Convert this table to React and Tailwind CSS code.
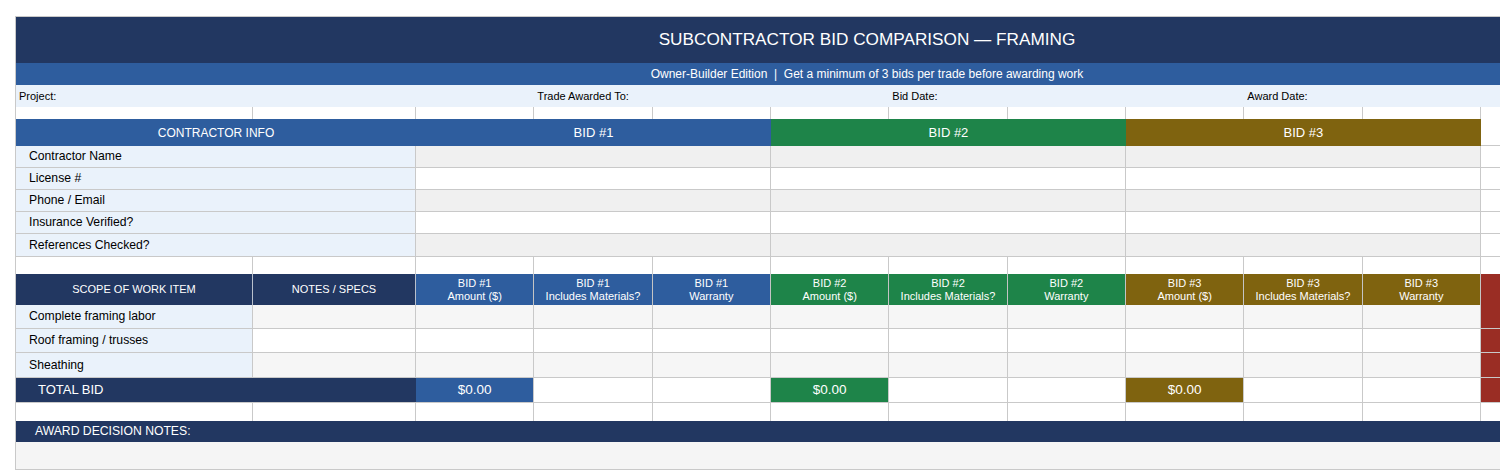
import React from "react";

const NAVY = "bg-[#223761]";
const BLUE = "bg-[#2e5d9e]";
const GREEN = "bg-[#1e8449]";
const GOLD = "bg-[#7f630f]";
const RED = "bg-[#9a2d24]";
const LIGHT = "bg-[#eaf2fb]";
const LINE = "border-[#c9c9c9]";

const bids = [
  { n: 1, bg: BLUE },
  { n: 2, bg: GREEN },
  { n: 3, bg: GOLD },
];

function BlankRow({ h }) {
  return (
    <>
      {Array.from({ length: 12 }).map((_, i) => (
        <div key={i} className={`${h} bg-white border-r ${LINE}`} />
      ))}
    </>
  );
}

export default function App() {
  const contractorRows = [
    "Contractor Name",
    "License #",
    "Phone / Email",
    "Insurance Verified?",
    "References Checked?",
  ];
  const contractorHeights = ["h-[22px]", "h-[22px]", "h-[22px]", "h-[22px]", "h-[23px]"];
  const scopeRows = ["Complete framing labor", "Roof framing / trusses", "Sheathing"];
  const scopeHeights = ["h-[24px]", "h-[24px]", "h-[25px]"];
  const subCols = ["Amount ($)", "Includes Materials?", "Warranty"];

  return (
    <div className="w-[1500px] h-[473px] overflow-hidden bg-white pt-[16px] pl-[15px] font-['Liberation_Sans',Arial,sans-serif] text-black">
      <div className={`grid w-max grid-cols-[237px_163px_repeat(9,118.333px)_237px] border-l border-t ${LINE}`}>
        {/* Title */}
        <div className={`col-span-12 h-[46px] ${NAVY} text-white text-[17.2px] flex items-center justify-center`}>
          SUBCONTRACTOR BID COMPARISON — FRAMING
        </div>
        {/* Subtitle */}
        <div className={`col-span-12 h-[22px] ${BLUE} text-white text-[12px] flex items-center justify-center whitespace-pre`}>
          {"Owner-Builder Edition  |  Get a minimum of 3 bids per trade before awarding work"}
        </div>
        {/* Project row */}
        {["Project:", "Trade Awarded To:", "Bid Date:", "Award Date:"].map((t) => (
          <div key={t} className={`col-span-3 h-[22px] ${LIGHT} text-[11px] pl-[3px] pb-[3px] flex items-end`}>
            {t}
          </div>
        ))}
        <BlankRow h="h-[12px]" />

        {/* Contractor header */}
        <div className={`col-span-2 h-[27px] ${BLUE} text-white text-[12px] flex items-center justify-center`}>
          CONTRACTOR INFO
        </div>
        {bids.map((b) => (
          <div key={b.n} className={`col-span-3 h-[27px] ${b.bg} text-white text-[13px] flex items-center justify-center`}>
            BID #{b.n}
          </div>
        ))}
        <div className={`h-[27px] bg-white border-b border-r ${LINE}`} />

        {/* Contractor rows */}
        {contractorRows.map((label, i) => (
          <React.Fragment key={label}>
            <div className={`col-span-2 ${contractorHeights[i]} ${LIGHT} border-b border-r ${LINE} text-[12.2px] pl-[13px] flex items-center`}>
              {label}
            </div>
            {bids.map((b) => (
              <div
                key={b.n}
                className={`col-span-3 ${contractorHeights[i]} ${i % 2 === 0 ? "bg-[#f0f0f0]" : "bg-white"} border-b border-r ${LINE}`}
              />
            ))}
            <div className={`${contractorHeights[i]} bg-white border-b border-r ${LINE}`} />
          </React.Fragment>
        ))}

        <BlankRow h="h-[17px]" />

        {/* Scope header */}
        <div className={`h-[31px] ${NAVY} text-white text-[11px] flex items-center justify-center border-r border-[#b9c0cc]`}>
          SCOPE OF WORK ITEM
        </div>
        <div className={`h-[31px] ${NAVY} text-white text-[11px] flex items-center justify-center border-r border-[#b9c0cc]`}>
          NOTES / SPECS
        </div>
        {bids.map((b) =>
          subCols.map((s) => (
            <div
              key={`${b.n}-${s}`}
              className={`h-[31px] ${b.bg} text-white text-[11px] leading-[13px] flex flex-col items-center justify-center border-r border-[#c4c4c4]`}
            >
              <span>BID #{b.n}</span>
              <span>{s}</span>
            </div>
          ))
        )}
        <div className={`h-[31px] ${RED}`} />

        {/* Scope rows */}
        {scopeRows.map((label, i) => (
          <React.Fragment key={label}>
            <div className={`${scopeHeights[i]} ${LIGHT} border-b border-r ${LINE} text-[12.2px] pl-[13px] flex items-center`}>
              {label}
            </div>
            {Array.from({ length: 10 }).map((_, j) => (
              <div
                key={j}
                className={`${scopeHeights[i]} ${i % 2 === 0 ? "bg-[#f6f6f6]" : "bg-white"} border-b border-r ${LINE}`}
              />
            ))}
            <div className={`${scopeHeights[i]} ${RED} border-b border-[#c9c9c9]`} />
          </React.Fragment>
        ))}

        {/* Total row */}
        <div className={`col-span-2 h-[25px] ${NAVY} text-white text-[13px] pl-[22px] flex items-center border-b ${LINE}`}>
          TOTAL BID
        </div>
        {bids.map((b) => (
          <React.Fragment key={b.n}>
            <div className={`h-[25px] ${b.bg} text-white text-[13.5px] flex items-center justify-center border-b border-r ${LINE}`}>
              $0.00
            </div>
            <div className={`h-[25px] bg-white border-b border-r ${LINE}`} />
            <div className={`h-[25px] bg-white border-b border-r ${LINE}`} />
          </React.Fragment>
        ))}
        <div className={`h-[25px] ${RED} border-b ${LINE}`} />

        <BlankRow h="h-[18px]" />

        {/* Award decision notes */}
        <div className={`col-span-12 h-[21px] ${NAVY} text-white text-[12.2px] pl-[19px] flex items-center`}>
          AWARD DECISION NOTES:
        </div>
        <div className={`col-span-12 h-[28px] bg-[#f5f5f5] border-b ${LINE}`} />
      </div>
    </div>
  );
}
